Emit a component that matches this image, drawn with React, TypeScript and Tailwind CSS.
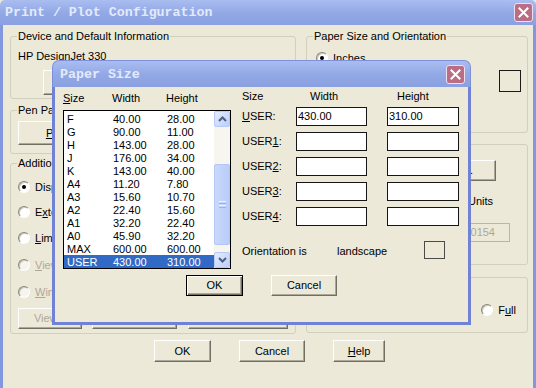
import React from "react";

function Btn({
  children,
  className = "",
  focus = false,
  disabled = false,
}: {
  children?: React.ReactNode;
  className?: string;
  focus?: boolean;
  disabled?: boolean;
}) {
  return (
    <div
      className={`flex items-center justify-center bg-[#ece9d8] border leading-[13px] ${
        focus
          ? "border-black shadow-[inset_1px_1px_0_#ffffff,inset_-1px_-1px_0_#716f64,inset_-2px_-2px_0_#aca899]"
          : "border-t-white border-l-white border-r-[#716f64] border-b-[#716f64] shadow-[inset_-1px_-1px_0_#aca899]"
      } ${disabled ? "text-[#aca899]" : "text-black"} ${className}`}
    >
      {children}
    </div>
  );
}

function Radio({ checked = false, disabled = false }: { checked?: boolean; disabled?: boolean }) {
  return (
    <span
      className={`flex items-center justify-center w-[12px] h-[12px] rounded-full border border-t-[#8a877a] border-l-[#8a877a] border-b-white border-r-white shadow-[inset_1px_1px_0_#c9c6b8] ${
        disabled ? "bg-[#f5f4ef]" : "bg-white"
      }`}
    >
      {checked && <span className="w-[4px] h-[4px] rounded-full bg-black" />}
    </span>
  );
}

function Group({
  label,
  className = "",
  children,
}: {
  label: string;
  className?: string;
  children?: React.ReactNode;
}) {
  return (
    <fieldset className={`min-w-0 border border-[#d0d0bf] rounded-[3px] ${className}`}>
      <legend className="ml-[6px] px-[1px] leading-[12px]">{label}</legend>
      {children}
    </fieldset>
  );
}

function CloseBtn({ className = "" }: { className?: string }) {
  return (
    <div
      className={`flex items-center justify-center w-[19px] h-[19px] rounded-[3px] bg-[#bb6d86] border border-[#ecdfee] ${className}`}
    >
      <svg width="11" height="11" viewBox="0 0 11 11">
        <path d="M1.5 1.5 L9.5 9.5 M9.5 1.5 L1.5 9.5" stroke="#ffffff" strokeWidth="2" strokeLinecap="square" />
      </svg>
    </div>
  );
}

function U({ children }: { children: React.ReactNode }) {
  return <span className="underline underline-offset-[1px]">{children}</span>;
}

const rows: [string, string, string][] = [
  ["F", "40.00", "28.00"],
  ["G", "90.00", "11.00"],
  ["H", "143.00", "28.00"],
  ["J", "176.00", "34.00"],
  ["K", "143.00", "40.00"],
  ["A4", "11.20", "7.80"],
  ["A3", "15.60", "10.70"],
  ["A2", "22.40", "15.60"],
  ["A1", "32.20", "22.40"],
  ["A0", "45.90", "32.20"],
  ["MAX", "600.00", "600.00"],
  ["USER", "430.00", "310.00"],
];

function ScrollArrow({ up }: { up: boolean }) {
  return (
    <div className="h-[16px] rounded-[2px] border border-[#b7c9f4] bg-gradient-to-br from-[#e4ecfd] to-[#bccff9] flex items-center justify-center">
      <svg width="9" height="6" viewBox="0 0 9 6">
        <path
          d={up ? "M1 5 L4.5 1.5 L8 5" : "M1 1 L4.5 4.5 L8 1"}
          stroke="#4d6185"
          strokeWidth="2"
          fill="none"
        />
      </svg>
    </div>
  );
}

function PaperSizeDialog() {
  const userRows = [
    { label: <><U>U</U>SER:</>, w: "430.00", h: "310.00" },
    { label: <>USER<U>1</U>:</>, w: "", h: "" },
    { label: <>USER<U>2</U>:</>, w: "", h: "" },
    { label: <>USER<U>3</U>:</>, w: "", h: "" },
    { label: <>USER<U>4</U>:</>, w: "", h: "" },
  ];
  return (
    <div className="absolute left-[49px] top-[35px] w-[419px] h-[265px] flex flex-col">
      <div className="h-[27px] shrink-0 flex items-center justify-between pl-[7px] pr-[5px] rounded-t-[7px] bg-gradient-to-b from-[#aabdf1] via-[#93a9e6] to-[#8aa0e0] border-x border-t border-[#7d90dc]">
        <span className="font-['Liberation_Mono',monospace] font-bold text-[13.3px] text-[#e3eafa] pt-[1px]">
          Paper Size
        </span>
        <CloseBtn />
      </div>
      <div className="flex-1 bg-[#ece9d8] border-x-[3px] border-b-[3px] border-[#7082d6] flex flex-col">
        <div className="flex">
          <div className="ml-[8px] w-[168px]">
            <div className="pt-[5px] flex leading-[13px]">
              <span className="w-[49px]">
                <U>S</U>ize
              </span>
              <span className="w-[54px]">Width</span>
              <span>Height</span>
            </div>
            <div className="mt-[5px] h-[159px] border border-black bg-white flex">
              <div className="w-[150px] pt-[1px]">
                {rows.map(([n, w, h], i) => {
                  const sel = i === rows.length - 1;
                  return (
                    <div
                      key={n}
                      className={`h-[13px] leading-[12px] flex items-center pl-[3px] ${
                        sel ? "bg-[#316ac5] text-white" : "text-black"
                      }`}
                    >
                      <span className="w-[46px]">{n}</span>
                      <span className="w-[54px]">{w}</span>
                      <span>{h}</span>
                    </div>
                  );
                })}
              </div>
              <div className="w-[16px] flex flex-col bg-[#f6f5f0]">
                <ScrollArrow up />
                <div className="flex-1 flex flex-col">
                  <div className="mt-[37px] h-[81px] rounded-[2px] border border-[#b3c7f6] bg-gradient-to-r from-[#c9d8fc] to-[#b9cdf9] flex flex-col items-center justify-center gap-[1px]">
                    <div className="w-[7px] h-[1px] bg-[#eef3fe]" />
                    <div className="w-[7px] h-[1px] bg-[#9cb3ee]" />
                    <div className="w-[7px] h-[1px] bg-[#eef3fe]" />
                    <div className="w-[7px] h-[1px] bg-[#9cb3ee]" />
                  </div>
                </div>
                <ScrollArrow up={false} />
              </div>
            </div>
          </div>
          <div className="ml-[11px] flex flex-col">
            <div className="pt-[3px] flex leading-[13px]">
              <span className="w-[68px]">Size</span>
              <span className="w-[87px]">Width</span>
              <span>Height</span>
            </div>
            <div className="mt-[4px] flex flex-col gap-[6px]">
              {userRows.map((r, i) => (
                <div key={i} className="h-[19px] flex items-center">
                  <span className="w-[54px] leading-[13px]">{r.label}</span>
                  <div className="w-[71px] h-[19px] border border-[#151515] bg-white pl-[1px] flex items-center leading-[13px]">
                    {r.w}
                  </div>
                  <div className="ml-[20px] w-[72px] h-[19px] border border-[#151515] bg-white pl-[1px] flex items-center leading-[13px]">
                    {r.h}
                  </div>
                </div>
              ))}
            </div>
            <div className="mt-[15px] h-[18px] flex items-center leading-[13px]">
              <span className="w-[95px] pt-[3px]">Orientation is</span>
              <span className="w-[87px] pt-[3px]">landscape</span>
              <div className="w-[21px] h-[18px] border border-[#4a4a4a]" />
            </div>
          </div>
        </div>
        <div className="mt-[6px] flex justify-center gap-[28px]">
          <Btn focus className="w-[57px] h-[21px]">
            OK
          </Btn>
          <Btn className="w-[66px] h-[21px]">Cancel</Btn>
        </div>
      </div>
    </div>
  );
}

export default function App() {
  return (
    <div className="w-[536px] h-[388px] overflow-hidden flex flex-col font-['Liberation_Sans',Arial,sans-serif] text-[11px] text-black bg-[#ece9d8]">
      <div className="h-[25px] shrink-0 flex items-center justify-between pl-[5px] pr-[3px] rounded-t-[5px] bg-gradient-to-b from-[#aabdf1] via-[#93a9e6] to-[#8aa0e0]">
        <span className="font-['Liberation_Mono',monospace] font-bold text-[13.3px] text-[#e3eafa]">
          Print / Plot Configuration
        </span>
        <CloseBtn />
      </div>
      <div className="relative flex-1 bg-[#ece9d8] border-x-[3px] border-[#8197de] flex flex-col pt-[5px]">
        <div className="flex">
          {/* Left column */}
          <div className="ml-[7px] w-[286px] flex flex-col">
            <Group label="Device and Default Information" className="h-[69px]">
              <div className="pl-[7px] pt-[8px] leading-[13px]">HP DesignJet 330</div>
              <Btn className="ml-[32px] mt-[7px] w-[220px] h-[25px]">Device and Default Selection...</Btn>
            </Group>
            <Group label="Pen Parameters" className="mt-[5px] h-[50px]">
              <div className="pl-[7px] mt-[5px] flex">
                <Btn className="w-[150px] h-[24px]">
                  <U>P</U>en Assignments...
                </Btn>
                <Btn className="ml-[10px] w-[105px] h-[24px]">Optimization...</Btn>
              </div>
            </Group>
            <Group label="Additional Parameters" className="mt-[3px] h-[177px]">
              <div className="flex flex-col pl-[7px]">
                {[
                  { t: <>Display</>, c: true, d: false, m: "mt-[11px]" },
                  { t: <>E<U>x</U>tents</>, c: false, d: false, m: "mt-[11px]" },
                  { t: <><U>L</U>imits</>, c: false, d: false, m: "mt-[12px]" },
                  { t: <><U>V</U>iew</>, c: false, d: true, m: "mt-[13px]" },
                  { t: <><U>W</U>indow</>, c: false, d: true, m: "mt-[13px]" },
                ].map((r, i) => (
                  <div key={i} className={`h-[14px] flex items-center gap-[5px] ${r.m}`}>
                    <Radio checked={r.c} disabled={r.d} />
                    <span className={`leading-[13px] ${r.d ? "text-[#aca899]" : "text-black"}`}>{r.t}</span>
                  </div>
                ))}
                <div className="mt-[9px] flex">
                  <Btn disabled className="w-[64px] h-[21px]">
                    View...
                  </Btn>
                  <Btn disabled className="ml-[10px] w-[85px] h-[21px]">
                    Window...
                  </Btn>
                  <Btn className="ml-[11px] w-[100px] h-[21px]">File Name...</Btn>
                </div>
              </div>
            </Group>
          </div>
          {/* Right column */}
          <div className="ml-[10px] w-[222px] flex flex-col">
            <Group label="Paper Size and Orientation" className="h-[103px]">
              <div className="flex justify-between">
                <div className="pl-[9px] pt-[9px] flex flex-col">
                  <div className="h-[14px] flex items-center gap-[5px]">
                    <Radio checked />
                    <span className="leading-[13px]">
                      <U>I</U>nches
                    </span>
                  </div>
                  <div className="mt-[8px] h-[14px] flex items-center gap-[5px]">
                    <Radio />
                    <span className="leading-[13px]">
                      <U>M</U>M
                    </span>
                  </div>
                </div>
                <div className="mt-[28px] mr-[6px] w-[22px] h-[22px] border border-[#1a1a1a]" />
              </div>
            </Group>
            <Group label="Scale, Rotation, and Origin" className="mt-[5px] h-[127px]">
              <div className="flex flex-col items-end">
                <Btn className="mt-[10px] mr-[31px] w-[150px] h-[21px]">Rotation and Origin...</Btn>
                <div className="mt-[14px] mr-[34px] leading-[13px]">Plotted Inches = Drawing Units</div>
                <div className="mt-[15px] mr-[17px] w-[80px] h-[19px] border border-[#b9b6a6] flex items-center justify-end pr-[14px] text-[#aca899] leading-[13px]">
                  2.340154
                </div>
              </div>
            </Group>
            <Group label="Plot Preview" className="mt-[6px] h-[62px]">
              <div className="mt-[20px] h-[14px] flex items-center justify-end gap-[5px] pr-[11px]">
                <Radio />
                <span className="leading-[13px]">
                  F<U>u</U>ll
                </span>
              </div>
            </Group>
          </div>
        </div>
        <div className="mt-[6px] pl-[151px] flex">
          <Btn className="w-[57px] h-[22px]">OK</Btn>
          <Btn className="ml-[28px] w-[66px] h-[22px]">Cancel</Btn>
          <Btn className="ml-[28px] w-[52px] h-[22px]">
            <U>H</U>elp
          </Btn>
        </div>
        <PaperSizeDialog />
      </div>
    </div>
  );
}
